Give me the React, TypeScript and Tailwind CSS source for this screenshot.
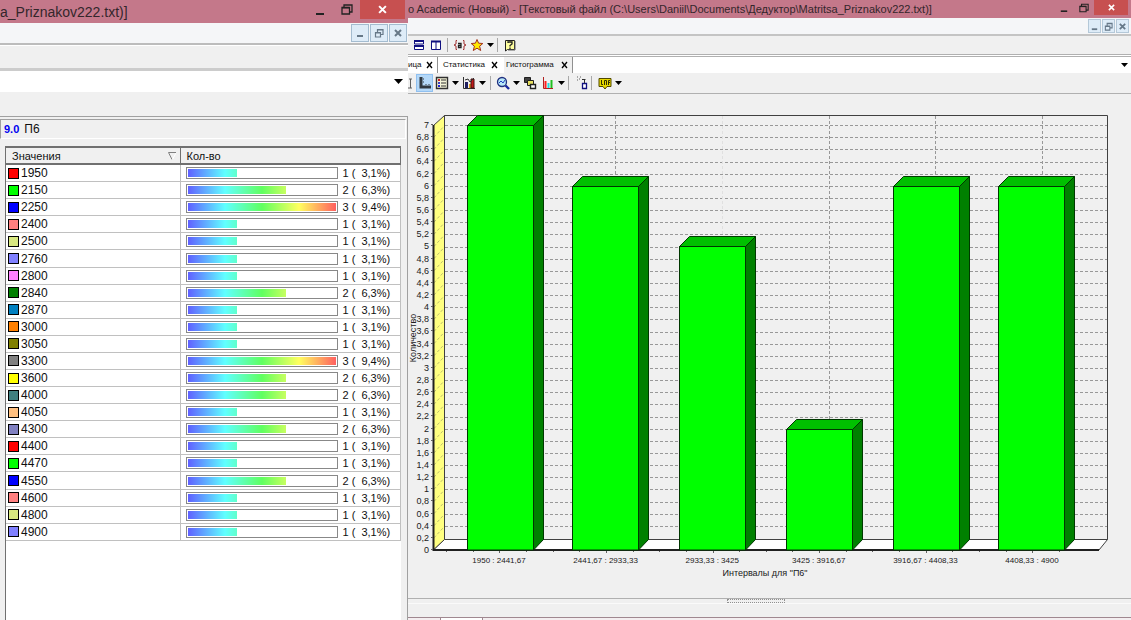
import type { ReactNode } from "react";

const values: [string, string, number][] = [
  ["1950", "#ff0000", 1],
  ["2150", "#00ff00", 2],
  ["2250", "#0000ff", 3],
  ["2400", "#ff8080", 1],
  ["2500", "#d8e880", 1],
  ["2760", "#8080ff", 1],
  ["2800", "#ff80ff", 1],
  ["2840", "#008000", 2],
  ["2870", "#0080c0", 1],
  ["3000", "#ff8000", 1],
  ["3050", "#808000", 1],
  ["3300", "#808080", 3],
  ["3600", "#ffff00", 2],
  ["4000", "#408080", 2],
  ["4050", "#ffc080", 1],
  ["4300", "#8080c0", 2],
  ["4400", "#ff0000", 1],
  ["4470", "#00ff00", 1],
  ["4550", "#0000ff", 2],
  ["4600", "#ff8080", 1],
  ["4800", "#d8e880", 1],
  ["4900", "#8080ff", 1],
];

const percents: Record<number, string> = { 1: "3,1%", 2: "6,3%", 3: "9,4%" };

const bars: [number, number, string][] = [
  [59, 7, "1950 : 2441,67"],
  [164, 6, "2441,67 : 2933,33"],
  [271, 5, "2933,33 : 3425"],
  [378, 2, "3425 : 3916,67"],
  [485, 6, "3916,67 : 4408,33"],
  [590, 6, "4408,33 : 4900"],
];

function Caret({ label, big }: { label: string; big?: boolean }) {
  return (
    <button aria-label={label} className="flex h-4 w-[10px] shrink-0 items-center justify-center">
      <svg viewBox="0 0 9 5" className={big ? "h-[5px] w-[9px]" : "h-1 w-[7px]"}>
        <path d="M0 0H9L4.5 5Z" fill="#000" />
      </svg>
    </button>
  );
}

function Sep() {
  return <span className="h-[14px] w-px shrink-0 bg-[#a8a8a8]" />;
}

function Tool({ label, active, children }: { label: string; active?: boolean; children: ReactNode }) {
  return (
    <button
      aria-label={label}
      className={
        active
          ? "flex h-[18px] w-[17px] shrink-0 items-center justify-center border border-[#90c0f0] bg-[#b4d8f8]"
          : "flex h-[18px] w-[17px] shrink-0 items-center justify-center"
      }
    >
      <svg viewBox="0 0 14 14" className="h-[14px] w-[14px] shrink-0" fill="none">
        {children}
      </svg>
    </button>
  );
}

function CaptionButtons({ large }: { large?: boolean }) {
  return (
    <div className={large ? "mr-[3px] flex h-[19px]" : "mr-[3px] flex h-[15px]"}>
      <button aria-label="Свернуть" className={large ? "flex w-[27px] items-center justify-center" : "flex w-5 items-center justify-center"}>
        <svg viewBox="0 0 10 10" className={large ? "h-[10px] w-[10px]" : "h-2 w-2"}>
          <path d="M1 9H9" stroke="#222" strokeWidth="2" />
        </svg>
      </button>
      <button aria-label="Восстановить" className={large ? "flex w-[27px] items-center justify-center" : "flex w-5 items-center justify-center"}>
        <svg viewBox="0 0 12 11" className={large ? "h-[11px] w-3" : "h-[10px] w-[10px]"} fill="none" stroke="#222">
          <path d="M1 3.5H8.5V10H1ZM3 3V1H11V8H9" strokeWidth="1.3" />
          <path d="M1 3.7H8.5" strokeWidth="1.5" />
        </svg>
      </button>
      <button
        aria-label="Закрыть"
        className={large ? "flex w-[45px] items-center justify-center bg-[#c75050]" : "flex w-[34px] items-center justify-center bg-[#c75050]"}
      >
        <svg viewBox="0 0 8 8" className={large ? "h-[9px] w-[9px]" : "h-[7px] w-[7px]"}>
          <path d="M1 1L7 7M7 1L1 7" stroke="#fff" strokeWidth="1.8" />
        </svg>
      </button>
    </div>
  );
}

function DocumentButtons({ large }: { large?: boolean }) {
  const button = large
    ? "flex h-[18px] w-[18px] items-center justify-center border border-[#a4bcd0] bg-[#deecf8]"
    : "flex h-[14px] w-[13px] items-center justify-center border border-[#b4c8d8] bg-[#deecf8]";
  const glyph = large ? "h-[10px] w-[10px]" : "h-[9px] w-[9px]";
  return (
    <div className={large ? "mr-px flex gap-px" : "mr-[2px] flex gap-px"}>
      <button aria-label="Свернуть документ" className={button}>
        <svg viewBox="0 0 10 10" className={glyph}>
          <path d="M2 8H8" stroke="#667888" strokeWidth="2" />
        </svg>
      </button>
      <button aria-label="Восстановить документ" className={button}>
        <svg viewBox="0 0 10 10" className={glyph} fill="none" stroke="#667888" strokeWidth="1.2">
          <path d="M1.5 4.5H6.5V9H1.5ZM3.5 4V1.5H9V6.5H7M1.5 5H6.5M3.5 2H9" />
        </svg>
      </button>
      <button aria-label="Закрыть документ" className={button}>
        <svg viewBox="0 0 10 10" className={glyph}>
          <path d="M2 2L8 8M8 2L2 8" stroke="#667888" strokeWidth="2" />
        </svg>
      </button>
    </div>
  );
}

function ValuesWindow() {
  return (
    <section className="flex flex-col">
      <header className="flex h-[23px] items-start justify-between overflow-hidden bg-[#c4788a]">
        <h1 className="text-[14px] leading-[24px] whitespace-nowrap text-[#33262b]">a_Priznakov222.txt)]</h1>
        <CaptionButtons large />
      </header>
      <div className="flex h-[22px] items-start justify-end border-b-2 border-[#bcbcbc] bg-[#f5f6f8] pt-[1px]">
        <DocumentButtons large />
      </div>
      <div className="h-[26px] border-t border-b-[3px] border-t-white border-b-[#cccccc]" />
      <div className="flex h-[21px] items-center justify-end bg-white pr-[5px]">
        <Caret label="Список вкладок" big />
      </div>
      <div className="h-6" />
      <div className="flex flex-1 flex-col border-t border-r border-[#a0a0a0]">
        <div className="mt-[2px] mr-px flex h-[20px] items-center gap-[5px] border border-[#a0a0a0] border-r-white border-b-white pl-[3px]">
          <span className="text-[11px] font-bold text-[#0000f0]">9.0</span>
          <span className="text-[12px]">П6</span>
        </div>
        <div className="mt-[7px] mr-[6px] ml-[5px] flex-1 border-t-2 border-l border-[#707070] bg-white">
          <table className="h-[393px] w-full table-fixed border-collapse text-[12px] leading-[14px]">
            <colgroup>
              <col className="w-[174px]" />
              <col />
            </colgroup>
            <thead>
              <tr className="h-[16px] bg-[#f0f0f0] text-left">
                <th scope="col" className="border-r border-b-2 border-[#707070] p-0 font-normal">
                  <span className="flex items-center justify-between pr-1 pl-[6px] text-[11px]">
                    Значения
                    <svg viewBox="0 0 8 8" className="h-2 w-2" fill="none">
                      <path d="M0.5 0.5H8M0.5 0.5L4 7.5" stroke="#808080" />
                      <path d="M8 1L4.5 7.5" stroke="#fff" />
                    </svg>
                  </span>
                </th>
                <th scope="col" className="border-r border-b-2 border-[#707070] p-0 pl-[6px] text-[11px] font-normal">
                  Кол-во
                </th>
              </tr>
            </thead>
            <tbody>
              {values.map(([value, color, count]) => (
                <tr key={value} className="border-b border-[#c0c0c0]">
                  <td className="border-r border-[#c0c0c0] p-0">
                    <div className="flex items-center gap-[2px] pl-[2px]">
                      <span className="h-[11px] w-[11px] border border-black" style={{ backgroundColor: color }} />
                      {value}
                    </div>
                  </td>
                  <td className="border-r border-[#c0c0c0] p-0">
                    <div className="flex items-center gap-[5px] pl-[5px]">
                      <div className="h-3 w-[152px] shrink-0 border border-[#888888] p-px">
                        <div className="h-2 overflow-hidden" style={{ width: `${(count / 3) * 100}%` }}>
                          <div className="h-2 w-[148px] bg-[linear-gradient(90deg,#6060ff,#60ffff_25%,#60ff60_50%,#ffff60_75%,#ff6060)]" />
                        </div>
                      </div>
                      <span className="text-[11px] whitespace-pre">{`${count} (  ${percents[count]})`}</span>
                    </div>
                  </td>
                </tr>
              ))}
            </tbody>
          </table>
        </div>
      </div>
    </section>
  );
}

function Histogram() {
  const unit = 425 / 7;
  const steps = Array.from({ length: 36 }, (_, i) => i);
  return (
    <svg viewBox="0 0 723 504" className="block h-auto w-full" role="img" aria-label="Гистограмма">
      <path d="M36.5 21.5V445.5H699.5V21.5Z" fill="#f0f0f0" stroke="#404040" />
      {steps.slice(1, 35).map((i) => {
        const y = Math.round(445 - (i * unit) / 5) - 0.5;
        return <path key={i} d={`M37 ${y}H699`} stroke="#989898" strokeDasharray="3 2" />;
      })}
      {[207.5, 421.5, 527.5, 634.5].map((x) => (
        <path key={x} d={`M${x} 22V445`} stroke="#989898" strokeDasharray="3 2" />
      ))}
      <path d="M314.5 22V445" stroke="#e0e0e0" strokeDasharray="3 2" />
      <path d="M25.5 31.5L36.5 21.5V445.5L25.5 456Z" fill="#ffff80" stroke="#404040" />
      {steps.slice(1, 35).map((i) => {
        const y = 456 - (i * unit) / 5;
        return <path key={i} d={`M26 ${y}L36 ${y - 11}`} stroke="#c0c070" strokeDasharray="3 2" />;
      })}
      <path d="M25.5 456L36.5 445.5H699.5L691 456Z" fill="#fff" stroke="#404040" />
      <path d="M25.5 31V457" stroke="#202020" strokeWidth="2" />
      <path d="M25 456H691" stroke="#202020" strokeWidth="2" />
      {bars.map(([x, value, label], n) => {
        const top = Math.round(456 - value * unit) + 0.5;
        const left = x + 0.5;
        const right = x + 66.5;
        return (
          <g key={label}>
            <g stroke="#003800" strokeLinejoin="round">
              <path d={`M${left} ${top}H${right}V456H${left}Z`} fill="#00ff00" />
              <path d={`M${left} ${top}L${left + 10} ${top - 10}H${right + 10}L${right} ${top}Z`} fill="#00c000" />
              <path d={`M${right} ${top}L${right + 10} ${top - 10}V445.5L${right} 456Z`} fill="#008000" />
            </g>
            <text x={91 + n * 106.6} y="469" textAnchor="middle" fontSize="8" fill="#202020">
              {label}
            </text>
          </g>
        );
      })}
      {Array.from({ length: 24 }, (_, i) => (
        <path key={i} d={`M${Math.round(38 + i * 26.65) + 0.5} 457V${i % 4 === 2 ? 459 : 458}`} stroke="#606060" />
      ))}
      {steps.map((i) => {
        const y = 456 - (i * unit) / 5;
        return (
          <g key={i}>
            <path d={`M23 ${Math.round(y) - 0.5}H25`} stroke="#606060" />
            <text x="21" y={Math.round(y) + 3} textAnchor="end" fontSize="9" fill="#202020">
              {(i / 5).toString().replace(".", ",")}
            </text>
          </g>
        );
      })}
      <text x="357" y="482" textAnchor="middle" fontSize="9" fill="#202020">
        Интервалы для "П6"
      </text>
      <text transform="translate(8 244) rotate(-90)" textAnchor="middle" fontSize="9" fill="#202020">
        Количество
      </text>
    </svg>
  );
}

function MainToolbar() {
  return (
    <div className="flex h-[18px] items-center overflow-hidden pl-[2px]">
      <Tool label="По горизонтали">
        <path d="M2.5 2.5H11.5V6H2.5ZM2.5 8H11.5V11.5H2.5Z" stroke="#101080" fill="#fff" />
        <path d="M2 3H12M2 8H12" stroke="#101080" strokeWidth="2" />
      </Tool>
      <Tool label="По вертикали">
        <path d="M2.5 3.5H11.5V11.5H2.5ZM7 3V12" stroke="#101080" fill="#fff" />
        <path d="M2 3.5H12" stroke="#101080" strokeWidth="2" />
      </Tool>
      <span className="w-[3px]" />
      <Sep />
      <span className="w-[3px]" />
      <Tool label="Переменные">
        <path d="M4 2.5H3V6L1 7L3 8V11.5H4M10 2.5H11V6L13 7L11 8V11.5H10" stroke="#a03030" />
        <path d="M5 5.5H8V9.5H5.5V7.5H8" stroke="#202020" strokeWidth="1.3" />
      </Tool>
      <Tool label="Избранное">
        <path d="M7 1.5L8.6 5.2L12.8 5.5L9.6 8.2L10.7 12.5L7 10.2L3.3 12.5L4.4 8.2L1.2 5.5L5.4 5.2Z" fill="#ffe800" stroke="#a03020" />
      </Tool>
      <Caret label="Меню избранного" />
      <span className="w-0.5" />
      <Sep />
      <span className="w-[3px]" />
      <Tool label="Справка">
        <path d="M2.5 2.5H11.5V11.5H4.5L2.5 13Z" fill="#ffffa0" stroke="#202020" />
        <path d="M12 3V12H5" stroke="#606060" />
        <path d="M5 5V4H9V6L7 7.5V8.5M7 9.5V11" stroke="#202020" strokeWidth="1.3" />
      </Tool>
    </div>
  );
}

function ChartToolbar() {
  return (
    <div className="flex h-[21px] items-center overflow-hidden border-b border-[#b0b0b0]">
      <svg viewBox="0 0 8 14" className="h-[14px] w-2 shrink-0" fill="none">
        <path d="M2.5 3V12M0 12H4M1 3H4" stroke="#606060" />
      </svg>
      <Tool label="Оси" active>
        <path d="M3 1V11H13" stroke="#303840" strokeWidth="3" />
        <path d="M5 3H6M5 6H6M8 9V8M11 9V8" stroke="#303840" />
      </Tool>
      <Tool label="Легенда">
        <path d="M1.5 1.5H12.5V12.5H1.5Z" fill="#f4f4d8" stroke="#303030" strokeWidth="1.4" />
        <path d="M6 4H11M6 7H11M6 10H11" stroke="#303030" />
        <path d="M3 4H5" stroke="#d02020" strokeWidth="2" />
        <path d="M3 7H5" stroke="#4040c0" strokeWidth="2" />
        <path d="M3 10H5" stroke="#2020d0" strokeWidth="2" />
      </Tool>
      <Caret label="Меню легенды" />
      <Tool label="Тип диаграммы">
        <path d="M1.5 1V12.5H13" stroke="#303030" />
        <path d="M3 6H6V12H3Z" fill="#202060" />
        <path d="M7 8H9V12H7Z" fill="#e0a020" />
        <path d="M9 3H12V12H9Z" fill="#c01818" stroke="#401010" />
        <path d="M3 4L6 3L8 6L12 2" stroke="#303030" />
      </Tool>
      <Caret label="Меню типа диаграммы" />
      <span className="w-[3px]" />
      <Sep />
      <span className="w-[3px]" />
      <Tool label="Масштаб">
        <circle cx="6" cy="6" r="4.5" fill="#b8e8f8" stroke="#203080" strokeWidth="1.3" />
        <path d="M3 7L5 5L7 7L9 4" stroke="#2040c0" />
        <path d="M9.5 9.5L13 13" stroke="#1828a0" strokeWidth="2.4" />
      </Tool>
      <Caret label="Меню масштаба" />
      <Tool label="Объёмный вид">
        <path d="M1.5 1.5H7.5V6.5H1.5Z" fill="#404040" stroke="#202020" />
        <path d="M4.5 4.5H10.5V9.5H4.5Z" fill="#e8e060" stroke="#202020" />
        <path d="M7.5 8.5H12.5V12.5H7.5Z" fill="#fff" stroke="#202020" strokeWidth="1.4" />
      </Tool>
      <span className="w-px" />
      <Tool label="Столбцы">
        <path d="M2.5 1V12.5H12" stroke="#b02020" />
        <path d="M4.5 5V12" stroke="#ff2020" strokeWidth="2" />
        <path d="M7.5 7V12" stroke="#20e0e0" strokeWidth="2" />
        <path d="M10.5 4V12" stroke="#20c020" strokeWidth="2" />
      </Tool>
      <Caret label="Меню столбцов" />
      <span className="w-0.5" />
      <Sep />
      <span className="w-[5px]" />
      <Tool label="Заливка">
        <path d="M6.5 7.5H10.5V12.5H6.5Z" fill="#fff" stroke="#101080" strokeWidth="1.3" />
        <path d="M8.5 7V4M6 3.5H9.5" stroke="#303030" />
        <path d="M1 1H2M3 3H4M1 4H2M4 1H5" stroke="#606060" />
      </Tool>
      <Sep />
      <span className="w-1" />
      <Tool label="Метки">
        <path d="M1 2.5H13V10.5H9L7 13L5 10.5H1Z" fill="#e8d800" stroke="#504800" />
        <path d="M3.5 4V8.5H5M6.5 9V4.5H8.5V9M10.5 9V4.5H12M10.5 6.5H12" stroke="#303000" />
      </Tool>
      <Caret label="Меню меток" />
    </div>
  );
}

function Tab({ title, active, className }: { title: string; active?: boolean; className: string }) {
  return (
    <div className={`flex h-full shrink-0 items-center justify-between border-r border-[#909090] ${active ? "bg-[#f0f0f0]" : ""} ${className}`}>
      <button className="text-[8px]">{title}</button>
      <button aria-label={`Закрыть: ${title}`}>
        <svg viewBox="0 0 7 8" className="h-2 w-[7px]">
          <path d="M1 1L6 7M6 1L1 7" stroke="#000" strokeWidth="1.3" />
        </svg>
      </button>
    </div>
  );
}

function HistogramWindow() {
  return (
    <section className="flex min-w-0 flex-col">
      <header className="flex h-[18px] items-start justify-between overflow-hidden bg-[#c4788a]">
        <h1 className="text-[11px] leading-[19px] whitespace-nowrap text-[#33262b]">
          o Academic (Новый) - [Текстовый файл (C:\Users\Daniil\Documents\Дедуктор\Matritsa_Priznakov222.txt)]
        </h1>
        <CaptionButtons />
      </header>
      <div className="flex h-[18px] items-start justify-end border-b-2 border-[#c4c4c4] bg-[#f5f6f8] pt-px">
        <DocumentButtons />
      </div>
      <MainToolbar />
      <div className="flex h-[19px] items-center justify-between border-t-[3px] border-double border-[#b0b0b0] bg-white">
        <div className="flex h-full">
          <Tab title="ица" className="w-[30px] pr-1" />
          <Tab title="Статистика" className="w-[66px] border-r-0 pr-[6px] pl-[5px]" />
          <Tab title="Гистограмма" active className="w-[69px] pr-1 pl-[2px]" />
        </div>
        <div className="flex pr-[2px]">
          <Caret label="Список вкладок" />
        </div>
      </div>
      <ChartToolbar />
      <Histogram />
      <div className="flex h-[6px] items-start justify-center border-t border-b border-t-[#b0b0b0] border-b-[#fafafa]">
        <div className="mr-7 h-1 w-[58px] border border-dotted border-[#909090]" />
      </div>
      <div className="flex-1" />
      <div className="flex h-[3px] border-t border-[#a08890] bg-[#f4eef0] pl-8">
        <div className="w-[43px] border-r border-l border-[#a08890] bg-white" />
      </div>
    </section>
  );
}

export default function App() {
  return (
    <main className="grid min-h-screen grid-cols-[408px_minmax(0,1fr)] bg-[#f0f0f0] font-['Liberation_Sans',Arial,sans-serif] text-[#101010]">
      <ValuesWindow />
      <HistogramWindow />
    </main>
  );
}
